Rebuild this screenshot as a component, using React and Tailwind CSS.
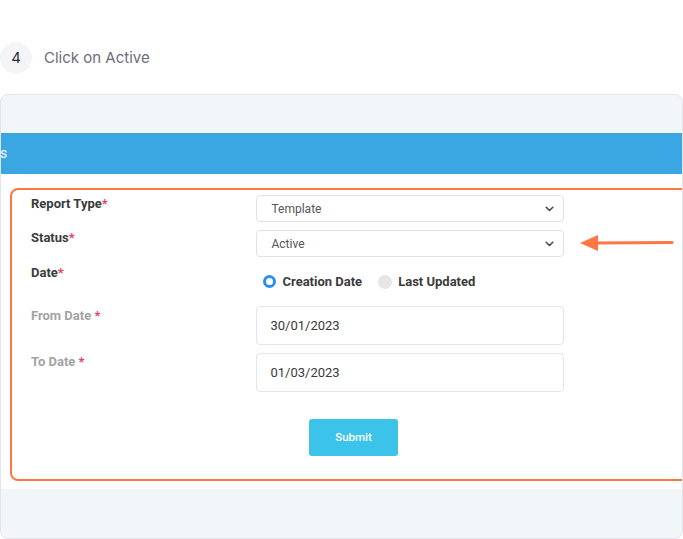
import React from "react";

function Chevron() {
  return (
    <svg width="9" height="6" viewBox="0 0 9 6" className="shrink-0">
      <path d="M1.2 1.3 L4.5 4.5 L7.8 1.3" fill="none" stroke="#4a4a4a" strokeWidth="1.6" strokeLinecap="round" strokeLinejoin="round" />
    </svg>
  );
}

function Select({ value }) {
  return (
    <div className="w-[308px] h-[27px] border border-[#dfe2ea] rounded-[4px] bg-white flex items-center justify-between pl-[15px] pr-[9px]">
      <span className="text-[12px] text-[#555]">{value}</span>
      <Chevron />
    </div>
  );
}

function Input({ value }) {
  return (
    <div className="w-[308px] h-[39px] border border-[#e1e4ec] rounded-[4px] bg-white flex items-center pl-[14px]">
      <span className="text-[13px] text-[#3a3a3a]">{value}</span>
    </div>
  );
}

function Label({ children, muted }) {
  return (
    <div className={`w-[224.5px] shrink-0 text-[13px] font-bold leading-[16px] ${muted ? "text-[#a3a3a3]" : "text-[#3b3b3b]"}`}>
      {children}
    </div>
  );
}

export default function App() {
  return (
    <div className="w-[683px] h-[539px] bg-white overflow-hidden relative" style={{ fontFamily: "Roboto, 'Liberation Sans', sans-serif" }}>
      <div className="flex items-center h-[32px] mt-[42px]">
        <div className="w-[32px] h-[32px] rounded-full bg-[#f4f5f8] flex items-center justify-center text-[15px] text-[#2c2c3a]" style={{ fontFamily: "Inter, sans-serif" }}>
          4
        </div>
        <div className="ml-[12px] text-[15px] text-[#6e6b7b]" style={{ fontFamily: "Inter, sans-serif" }}>
          Click on Active
        </div>
      </div>

      <div className="mt-[20px] w-[683px] h-[445px] border border-[#e2e4ea] rounded-[8px] bg-[#f2f6f9] overflow-hidden flex flex-col">
        <div className="h-[38px] shrink-0" />
        <div className="h-[41px] shrink-0 bg-[#3aa6e2] flex items-center">
          <span className="text-[14px] text-white -ml-[1px]">s</span>
        </div>
        <div className="bg-white h-[315px] shrink-0 pl-[9px] pt-[14px]">
          <div className="w-[700px] h-[293px] border-[2.5px] border-[#ff7645] rounded-[8px] pl-[19px] pt-[5px]">
            <div className="flex items-start">
              <div className="w-[224.5px] pt-[1px]"><Label>Report Type<span className="text-[#e83e5c]">*</span></Label></div>
              <Select value="Template" />
            </div>
            <div className="flex items-start mt-[8px]">
              <Label>Status<span className="text-[#e83e5c]">*</span></Label>
              <Select value="Active" />
              <svg width="96" height="20" viewBox="0 0 96 20" className="ml-[15px] mt-[3px]">
                <path d="M17 10 L93 9.5" stroke="#ff7645" strokeWidth="3" strokeLinecap="round" />
                <path d="M1 10 L19 2 L19 18 Z" fill="#ff7645" />
              </svg>
            </div>
            <div className="flex items-start mt-[8px] h-[35px]">
              <Label>Date<span className="text-[#e83e5c]">*</span></Label>
              <div className="flex items-center mt-[7px] pl-[7px]">
                <div className="w-[13px] h-[13px] rounded-full border-[3.5px] border-[#2b8ef0] bg-white" />
                <span className="ml-[7px] text-[13px] font-bold text-[#3b3b3b]">Creation Date</span>
                <div className="ml-[16px] w-[14px] h-[14px] rounded-full bg-[#e6e6e6]" />
                <span className="ml-[6px] text-[13px] font-bold text-[#3b3b3b]">Last Updated</span>
              </div>
            </div>
            <div className="flex items-start mt-[6px]">
              <div className="pt-[2px]"><Label muted>From Date <span className="text-[#e83e5c]">*</span></Label></div>
              <Input value="30/01/2023" />
            </div>
            <div className="flex items-start mt-[8px]">
              <div className="pt-[1px]"><Label muted>To Date <span className="text-[#e83e5c]">*</span></Label></div>
              <Input value="01/03/2023" />
            </div>
            <button className="mt-[27px] ml-[278px] w-[89px] h-[37px] rounded-[3px] bg-[#3bc3ea] text-white text-[11.5px] font-medium flex items-center justify-center">
              Submit
            </button>
          </div>
        </div>
        <div className="flex-1" />
      </div>
    </div>
  );
}
